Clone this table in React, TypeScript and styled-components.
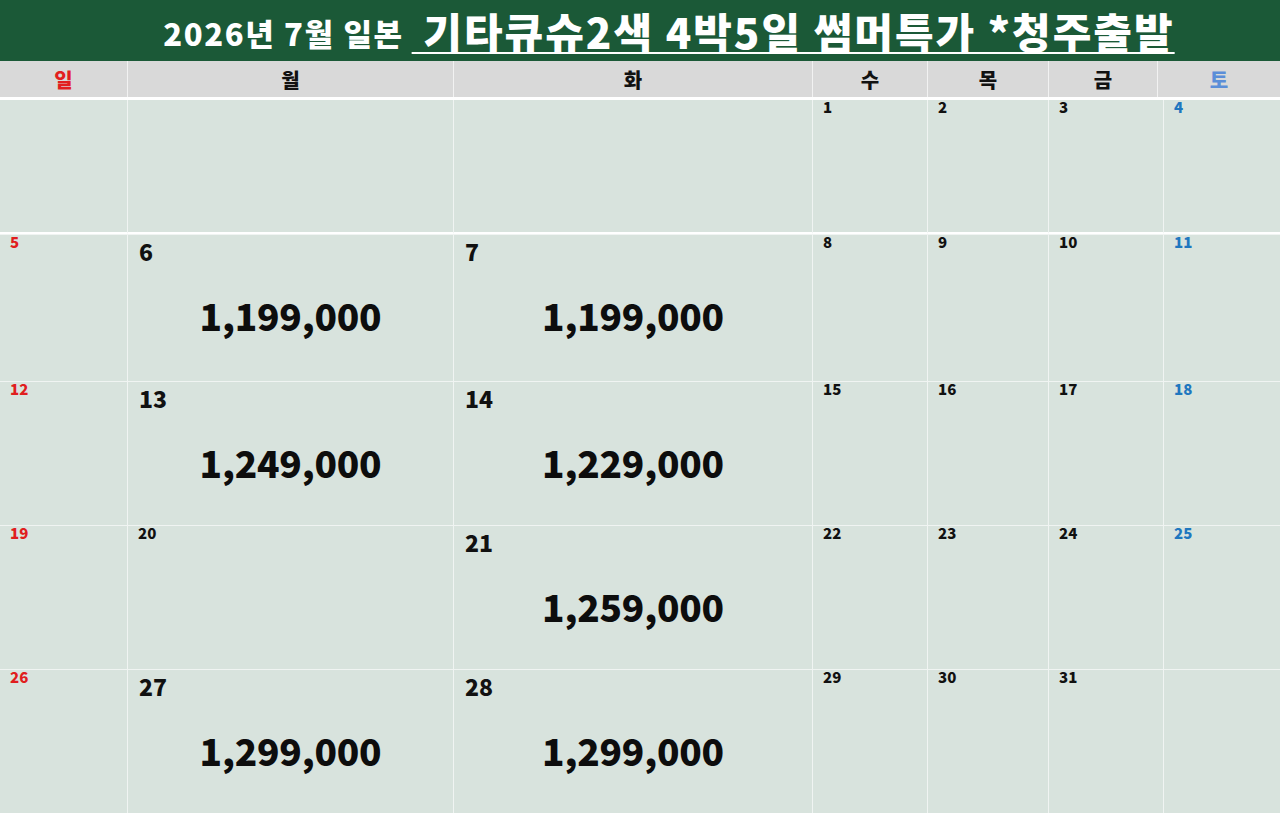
import React from "react";
import styled, { createGlobalStyle } from "styled-components";

const Global = createGlobalStyle`
  html, body { margin: 0; padding: 0; background: #ffffff; }
  body { font-family: "Noto Sans CJK KR", "Noto Sans", sans-serif; }
`;

const Page = styled.div`
  width: 1280px;
  height: 813px;
  display: flex;
  flex-direction: column;
  background: #ffffff;
  overflow: hidden;
`;

const TitleBar = styled.div`
  height: 61px;
  background: #1b5937;
  display: flex;
  align-items: center;
  justify-content: center;
  padding-left: 58px;
  color: #ffffff;
  white-space: pre;
`;

const TitleSmall = styled.span`
  font-family: "Noto Sans CJK KR", sans-serif;
  font-weight: 900;
  font-size: 31px;
  letter-spacing: 1.6px;
  margin-top: 4px;
  margin-right: 8px;
`;

const TitleBig = styled.span`
  font-family: "Noto Sans CJK KR", sans-serif;
  font-weight: 900;
  font-size: 42px;
  letter-spacing: 2px;
  text-decoration: underline;
  text-decoration-thickness: 2px;
  text-underline-offset: 3px;
`;

const HeadRow = styled.div`
  display: grid;
  grid-template-columns: 128px 326px 359px 115px 121px 109px 122px;
  height: 36px;
`;

const HeadCell = styled.div<{ $color: string; $last?: boolean }>`
  background: #d9d9d9;
  border-right: ${(p) => (p.$last ? "none" : "1px solid #f2f2f2")};
  display: flex;
  align-items: center;
  justify-content: center;
  font-weight: 900;
  font-size: 20px;
  color: ${(p) => p.$color};
`;

const Body = styled.div`
  display: grid;
  grid-template-columns: 128px 326px 359px 115px 121px 115px 116px;
  grid-template-rows: 134px 146px 143px 143px 143px;
  border-top: 3px solid #ffffff;
  row-gap: 1px;
  background: #f0f4f2;
`;

const Cell = styled.div<{ $gapBelow?: boolean; $last?: boolean }>`
  background: #d8e3dd;
  border-right: ${(p) => (p.$last ? "none" : "1px solid #f0f4f2")};
  border-bottom: ${(p) => (p.$gapBelow ? "2px solid #ffffff" : "none")};
  display: flex;
  flex-direction: column;
`;

const SmallDate = styled.div<{ $color: string }>`
  font-family: "Noto Sans CJK KR", sans-serif;
  font-weight: 900;
  font-size: 15px;
  line-height: 14px;
  padding: 0 0 0 10px;
  color: ${(p) => p.$color};
`;

const BigDate = styled.div`
  font-family: "Noto Sans CJK KR", sans-serif;
  font-weight: 900;
  font-size: 23px;
  line-height: 28px;
  padding: 2px 0 0 11px;
  color: #111111;
`;

const Price = styled.div`
  font-family: "Noto Sans CJK KR", sans-serif;
  font-weight: 900;
  font-size: 37px;
  line-height: 44px;
  text-align: center;
  margin-top: 28px;
  color: #0d0d0d;
  letter-spacing: -0.2px;
`;

type Day = { d?: number; price?: string };

const heads = [
  { t: "일", c: "#e21f1f" },
  { t: "월", c: "#111111" },
  { t: "화", c: "#111111" },
  { t: "수", c: "#111111" },
  { t: "목", c: "#111111" },
  { t: "금", c: "#111111" },
  { t: "토", c: "#5b8ed8" },
];

const weeks: Day[][] = [
  [{}, {}, {}, { d: 1 }, { d: 2 }, { d: 3 }, { d: 4 }],
  [{ d: 5 }, { d: 6, price: "1,199,000" }, { d: 7, price: "1,199,000" }, { d: 8 }, { d: 9 }, { d: 10 }, { d: 11 }],
  [{ d: 12 }, { d: 13, price: "1,249,000" }, { d: 14, price: "1,229,000" }, { d: 15 }, { d: 16 }, { d: 17 }, { d: 18 }],
  [{ d: 19 }, { d: 20 }, { d: 21, price: "1,259,000" }, { d: 22 }, { d: 23 }, { d: 24 }, { d: 25 }],
  [{ d: 26 }, { d: 27, price: "1,299,000" }, { d: 28, price: "1,299,000" }, { d: 29 }, { d: 30 }, { d: 31 }, {}],
];

const dayColor = (col: number) => (col === 0 ? "#e01e1e" : col === 6 ? "#1f77bf" : "#111111");

export default function App() {
  return (
    <Page>
      <Global />
      <TitleBar>
        <TitleSmall>2026년 7월 일본</TitleSmall>
        <TitleBig>{" 기타큐슈2색 4박5일 썸머특가 *청주출발"}</TitleBig>
      </TitleBar>
      <HeadRow>
        {heads.map((h, i) => (
          <HeadCell key={h.t} $color={h.c} $last={i === 6}>
            {h.t}
          </HeadCell>
        ))}
      </HeadRow>
      <Body>
        {weeks.map((w, r) =>
          w.map((day, c) => (
            <Cell key={`${r}-${c}`} $gapBelow={r === 0} $last={c === 6}>
              {day.d !== undefined &&
                (day.price ? (
                  <>
                    <BigDate>{day.d}</BigDate>
                    <Price>{day.price}</Price>
                  </>
                ) : (
                  <SmallDate $color={dayColor(c)}>{day.d}</SmallDate>
                ))}
            </Cell>
          ))
        )}
      </Body>
    </Page>
  );
}
